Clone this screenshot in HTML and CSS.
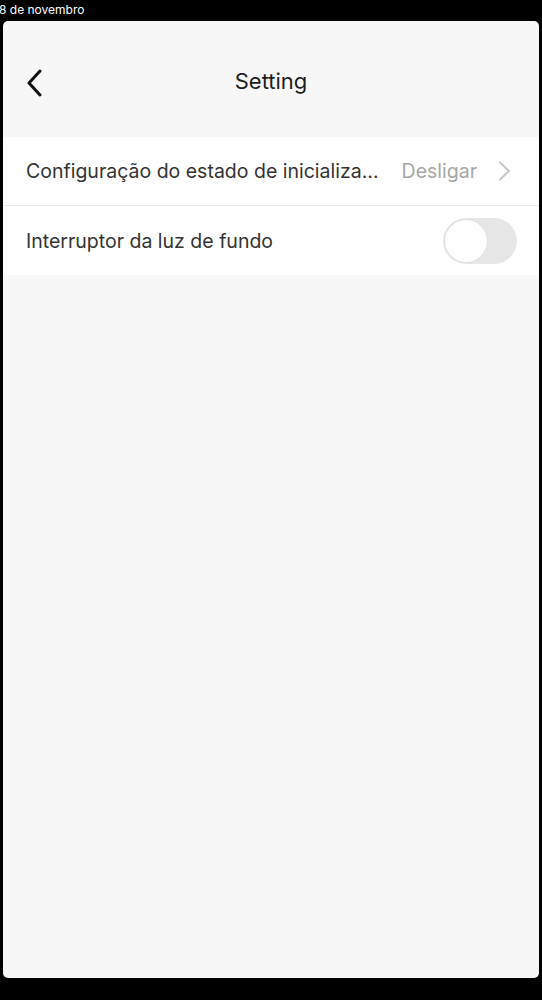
FILE: index.html
```html
<!DOCTYPE html>
<html lang="pt">
<head>
<meta charset="utf-8">
<title>Setting</title>
<link rel="stylesheet" href="styles.css">
</head>
<body>
    <div class="date">8 de novembro</div>
    <div class="screen">
        <header class="topbar">
            <span class="back">
                <svg width="18" height="28" viewBox="0 0 18 28">
                    <path d="M15 2 L4 14 L15 26" fill="none" stroke="#111" stroke-width="3" stroke-linecap="round" stroke-linejoin="round"/>
                </svg>
            </span>
            <h1>Setting</h1>
        </header>
        <section class="list">
            <div class="row">
                <span class="label">Configuração do estado de inicializa...</span>
                <span class="value">Desligar</span>
                <svg class="arrow" width="14" height="20" viewBox="0 0 14 20">
                    <path d="M2 1.5 L11 10 L2 18.5" fill="none" stroke="#c6c6c6" stroke-width="2" stroke-linecap="round" stroke-linejoin="round"/>
                </svg>
            </div>
            <div class="row">
                <span class="label">Interruptor da luz de fundo</span>
                <span class="switch"><span class="knob"></span></span>
            </div>
        </section>
    </div>
</body>
</html>
```

FILE: styles.css
```css
body {
    margin: 0;
    background: #000;
    font-family: Inter, "Liberation Sans", Arial, sans-serif;
}

.date {
    height: 21px;
    line-height: 19px;
    color: #fff;
    font-size: 12px;
    margin-left: -1px;
}

.screen {
    margin-left: 3px;
    width: 536px;
    height: 957px;
    background: #f7f7f7;
    border-radius: 5px;
    overflow: hidden;
}

.topbar {
    position: relative;
    height: 100px;
    padding-top: 20px;
    display: flex;
    align-items: center;
    justify-content: center;
    box-sizing: border-box;
}

.topbar h1 {
    margin: 0;
    font-size: 22px;
    font-weight: normal;
    color: #1c1c1c;
}

.back {
    position: absolute;
    left: 22px;
    top: 48px;
    display: flex;
}

.list {
    margin-top: 16px;
    background: #fff;
}

.row {
    height: 68px;
    display: flex;
    align-items: center;
    padding: 0 22px 0 23px;
    font-size: 19.5px;
    color: #333;
}

.row + .row {
    border-top: 1px solid #ececec;
    height: 69px;
}

.label {
    flex: 1;
    white-space: nowrap;
}

.value {
    color: #a6a6a6;
    margin-right: 21px;
}

.arrow {
    margin-right: 5px;
}

.switch {
    width: 74px;
    height: 46px;
    border-radius: 23px;
    background: #e6e6e6;
    display: flex;
    align-items: center;
    padding: 2px;
    box-sizing: border-box;
}

.knob {
    width: 42px;
    height: 42px;
    border-radius: 50%;
    background: #fff;
    box-shadow: 0 0 2px rgba(0, 0, 0, 0.08);
}
```
